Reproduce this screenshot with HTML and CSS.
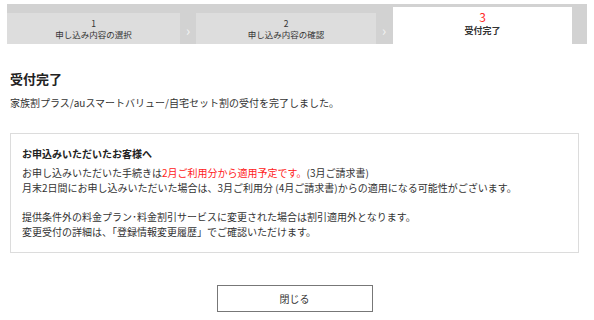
FILE: index.html
```html
<!DOCTYPE html>
<html lang="ja">
<head>
    <meta charset="UTF-8">
    <meta name="viewport" content="width=device-width, initial-scale=1.0">
    <title>受付完了</title>
    <link rel="stylesheet" href="styles.css">
</head>
<body>
    <div class="steps">
        <div class="step step_1">
            <span class="step_num">1</span>
            <span class="step_label">申し込み内容の選択</span>
        </div>
        <div class="step_arrow">&#8250;</div>
        <div class="step step_2">
            <span class="step_num">2</span>
            <span class="step_label">申し込み内容の確認</span>
        </div>
        <div class="step_arrow">&#8250;</div>
        <div class="step step_current">
            <span class="step_num">3</span>
            <span class="step_label">受付完了</span>
        </div>
    </div>

    <div class="content">
        <h2 class="titre">受付完了</h2>
        <p class="lead">家族割プラス/auスマートバリュー/自宅セット割の受付を完了しました。</p>

        <div class="notice">
            <p class="notice_title">お申込みいただいたお客様へ</p>
            <p class="notice_text">
                お申し込みいただいた手続きは<span class="red">2月ご利用分から適用予定です。</span>(3月ご請求書)<br>
                月末2日間にお申し込みいただいた場合は、3月ご利用分 (4月ご請求書)からの適用になる可能性がございます。
            </p>
            <p class="notice_text">
                提供条件外の料金プラン･料金割引サービスに変更された場合は割引適用外となります。<br>
                変更受付の詳細は、「登録情報変更履歴」でご確認いただけます。
            </p>
        </div>

        <div class="parent_btn">
            <button class="btn_close">閉じる</button>
        </div>
    </div>
</body>
</html>
```

FILE: styles.css
```css
body {
    margin: 0;
    padding: 0;
    font-family: "Noto Sans CJK JP", "Noto Sans", sans-serif;
    color: #333;
    background: #ffffff;
}

.steps {
    display: flex;
    align-items: flex-end;
    margin: 4px 7px 0 7px;
    padding-right: 15px;
    height: 40px;
    background: #d2d2d2;
}

.step {
    display: flex;
    flex-direction: column;
    align-items: center;
    justify-content: center;
    height: 31px;
    box-sizing: border-box;
    background: #dddddd;
    color: #333;
    font-size: 8.5px;
    line-height: 11px;
}

.step_1 {
    width: 173px;
}

.step_2 {
    width: 180px;
}

.step_arrow {
    width: 16px;
    height: 31px;
    display: flex;
    align-items: center;
    justify-content: center;
    color: #f4f4f4;
    font-size: 14px;
    padding-top: 2px;
    box-sizing: border-box;
}

.step_current {
    width: 179px;
    height: 37px;
    margin-left: 1px;
    background: #ffffff;
    justify-content: flex-start;
    padding-top: 2px;
}

.step_current .step_num {
    color: #ff2a2a;
    font-size: 12px;
    line-height: 16px;
}

.step_current .step_label {
    font-size: 9px;
    font-weight: bold;
    line-height: 12px;
}

.content {
    padding: 0 15px 0 10px;
}

.titre {
    margin: 26px 0 0 0;
    font-size: 13px;
    line-height: 18px;
    color: #222;
}

.lead {
    margin: 7px 0 0 0;
    font-size: 10px;
    line-height: 16px;
}

.notice {
    margin-top: 22px;
    border: 1px solid #dcdcdc;
    padding: 12px 11px 13px 11px;
    font-size: 10px;
    line-height: 15px;
}

.notice_title {
    margin: 0 0 4px 0;
    font-weight: bold;
    color: #222;
}

.notice_text {
    margin: 0 0 14px 0;
}

.notice_text:last-child {
    margin-bottom: 0;
}

.red {
    color: #ff2020;
}

.parent_btn {
    display: flex;
    justify-content: center;
    margin-top: 32px;
}

.btn_close {
    width: 156px;
    height: 27px;
    background: #ffffff;
    border: 1px solid #777;
    box-shadow: 0 1px 0 #aaa;
    font-family: "Noto Sans CJK JP", sans-serif;
    font-size: 10px;
    color: #333;
    cursor: pointer;
}
```
